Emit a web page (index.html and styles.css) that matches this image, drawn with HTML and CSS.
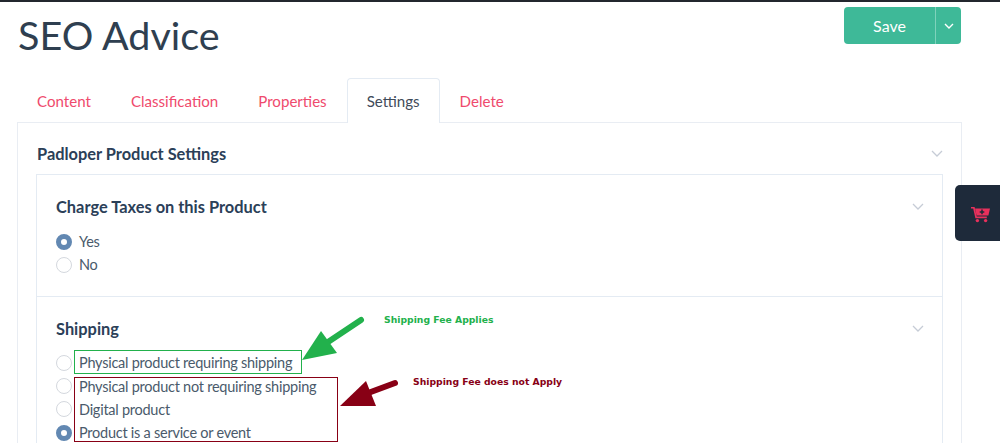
FILE: index.html
```html
<!DOCTYPE html>
<html lang="en">
  <head>
    <meta charset="utf-8" />
    <title>SEO Advice</title>
    <link rel="stylesheet" href="styles.css">
  </head>
  <body>
    <div class="topbar"></div>
    <div class="page">
      <div class="header">
        <h1 class="title">SEO Advice</h1>
        <div class="save">
          <span class="save-label">Save</span>
          <span class="save-more">
            <svg width="10" height="6" viewBox="0 0 10 6"><path d="M1 1l4 4 4-4" fill="none" stroke="#fff" stroke-width="1.4"/></svg>
          </span>
        </div>
      </div>

      <div class="tabs">
        <a class="tab">Content</a>
        <a class="tab">Classification</a>
        <a class="tab">Properties</a>
        <a class="tab active">Settings</a>
        <a class="tab">Delete</a>
      </div>

      <div class="panel">
        <div class="panel-head">
          <h3>Padloper Product Settings</h3>
          <svg class="chev" width="12" height="7" viewBox="0 0 12 7"><path d="M1 1l5 5 5-5" fill="none" stroke="#c6ccd6" stroke-width="1.3"/></svg>
        </div>
        <div class="inner">
          <div class="section">
            <div class="section-head">
              <h3>Charge Taxes on this Product</h3>
              <svg class="chev" width="12" height="7" viewBox="0 0 12 7"><path d="M1 1l5 5 5-5" fill="none" stroke="#c6ccd6" stroke-width="1.3"/></svg>
            </div>
            <div class="option"><span class="radio on"></span>Yes</div>
            <div class="option"><span class="radio"></span>No</div>
          </div>
          <div class="section shipping">
            <div class="section-head">
              <h3>Shipping</h3>
              <svg class="chev" width="12" height="7" viewBox="0 0 12 7"><path d="M1 1l5 5 5-5" fill="none" stroke="#c6ccd6" stroke-width="1.3"/></svg>
            </div>
            <div class="option"><span class="radio"></span>Physical product requiring shipping</div>
            <div class="option"><span class="radio"></span>Physical product not requiring shipping</div>
            <div class="option"><span class="radio"></span>Digital product</div>
            <div class="option"><span class="radio on"></span>Product is a service or event</div>
          </div>
        </div>
      </div>
    </div>

    <div class="cart-tab">
      <svg width="19" height="16" viewBox="0 0 19 16">
        <path d="M0 0h3.6l2.2 9.6h10v1.6H4.4L2.2 1.6H0z" fill="#e8305c"/>
        <path d="M4 1.5h15l-1.6 7H5.6z" fill="#e8305c"/>
        <path d="M11 2.6v4.6M8.7 4.9h4.6" stroke="#1e2a3a" stroke-width="1.5"/>
        <circle cx="6.4" cy="13.6" r="1.7" fill="#e8305c"/>
        <circle cx="14.6" cy="13.6" r="1.7" fill="#e8305c"/>
      </svg>
    </div>

    <!-- annotations drawn on top of the screenshot -->
    <div class="mark mark-green"></div>
    <div class="mark mark-red"></div>
    <svg class="arrows" width="1000" height="444" viewBox="0 0 1000 444">
      <path d="M361 320L322 346" stroke="#22b14c" stroke-width="6" stroke-linecap="round"/>
      <polygon points="302,360 321,331 337,353" fill="#22b14c"/>
      <path d="M395 383L360 396" stroke="#880015" stroke-width="6" stroke-linecap="round"/>
      <polygon points="340,406 366,381 376,406" fill="#880015"/>
    </svg>
    <div class="note note-green">Shipping Fee Applies</div>
    <div class="note note-red">Shipping Fee does not Apply</div>
  </body>
</html>
```

FILE: styles.css
```css
* {
  margin: 0;
  box-sizing: border-box;
}
html,
body {
  height: 444px;
  overflow: hidden;
}
body {
  position: relative;
  background-color: white;
  color: #354b60;
  font-family: Lato, "Open Sans", sans-serif;
  font-size: 14.5px;
}
.topbar {
  height: 2px;
  background-color: #23272e;
}
.page {
  height: 442px;
  overflow: hidden;
  padding: 0 38px 0 17px;
}
.header {
  display: flex;
  justify-content: space-between;
  align-items: flex-start;
  height: 76px;
}
.title {
  margin: 8px 0 0 1px;
  font-size: 39.5px;
  line-height: 50px;
  font-weight: 400;
  color: #2f3f50;
}
.save {
  display: flex;
  width: 117px;
  height: 37px;
  margin: 5px 1px 0 0;
  border-radius: 4px;
  background-color: #3eb998;
  color: white;
}
.save-label {
  flex: 1;
  text-align: center;
  line-height: 37px;
  font-size: 16px;
}
.save-more {
  width: 26px;
  display: flex;
  justify-content: center;
  align-items: center;
  border-left: 1px solid #7fd2bb;
}
.tabs {
  display: flex;
  height: 45px;
  margin-bottom: -1px;
}
.tab {
  padding: 0 19px;
  line-height: 44px;
  font-size: 15.1px;
  color: #ef4a6d;
  border: 1px solid transparent;
  border-bottom: 0;
}
.tab.active {
  color: #3f4b5a;
  background-color: white;
  border-color: #e4ebf3;
  border-radius: 4px 4px 0 0;
  position: relative;
  height: 45px;
}
.panel {
  border: 1px solid #e9edf3;
  border-bottom: 0;
  padding: 0 18px;
  height: 321px;
  overflow: hidden;
}
.panel h3,
.inner h3 {
  font-size: 16.4px;
  font-weight: 700;
  color: #2b4058;
}
.panel-head,
.section-head {
  display: flex;
  justify-content: space-between;
  align-items: center;
}
.panel-head {
  height: 51px;
  padding: 9px 0 0 1px;
}
.inner {
  border: 1px solid #e4ebf3;
}
.section {
  padding: 19px 18px 20px 19px;
  border-bottom: 1px solid #e4ebf3;
}
.section-head {
  height: 24px;
  margin-bottom: 12px;
}
.shipping .section-head {
  margin-bottom: 11px;
}
.option {
  display: flex;
  align-items: center;
  height: 23.2px;
  letter-spacing: -0.25px;
  color: #4a5a6b;
}
.radio {
  width: 16px;
  height: 16px;
  margin-right: 7px;
  border-radius: 50%;
  border: 1px solid #d4d8de;
  background-color: white;
}
.radio.on {
  border: 5.5px solid #6288b2;
  background-color: white;
}
.cart-tab {
  position: absolute;
  right: 0;
  top: 185px;
  width: 45px;
  height: 56px;
  padding: 3px 0 0 5px;
  display: flex;
  justify-content: center;
  align-items: center;
  background-color: #1e2a3a;
  border-radius: 5px 0 0 5px;
}
.mark {
  position: absolute;
  border: 1px solid;
}
.mark-green {
  left: 74px;
  top: 350px;
  width: 228px;
  height: 24px;
  border-color: #22b14c;
}
.mark-red {
  left: 74px;
  top: 377px;
  width: 264px;
  height: 65px;
  border-color: #880015;
}
.arrows {
  position: absolute;
  left: 0;
  top: 0;
}
.note {
  position: absolute;
  font-family: "DejaVu Sans", sans-serif;
  font-size: 9.25px;
  font-weight: 700;
}
.note-green {
  left: 384px;
  top: 314px;
  color: #22b14c;
}
.note-red {
  left: 413px;
  top: 376px;
  color: #880015;
}
```
